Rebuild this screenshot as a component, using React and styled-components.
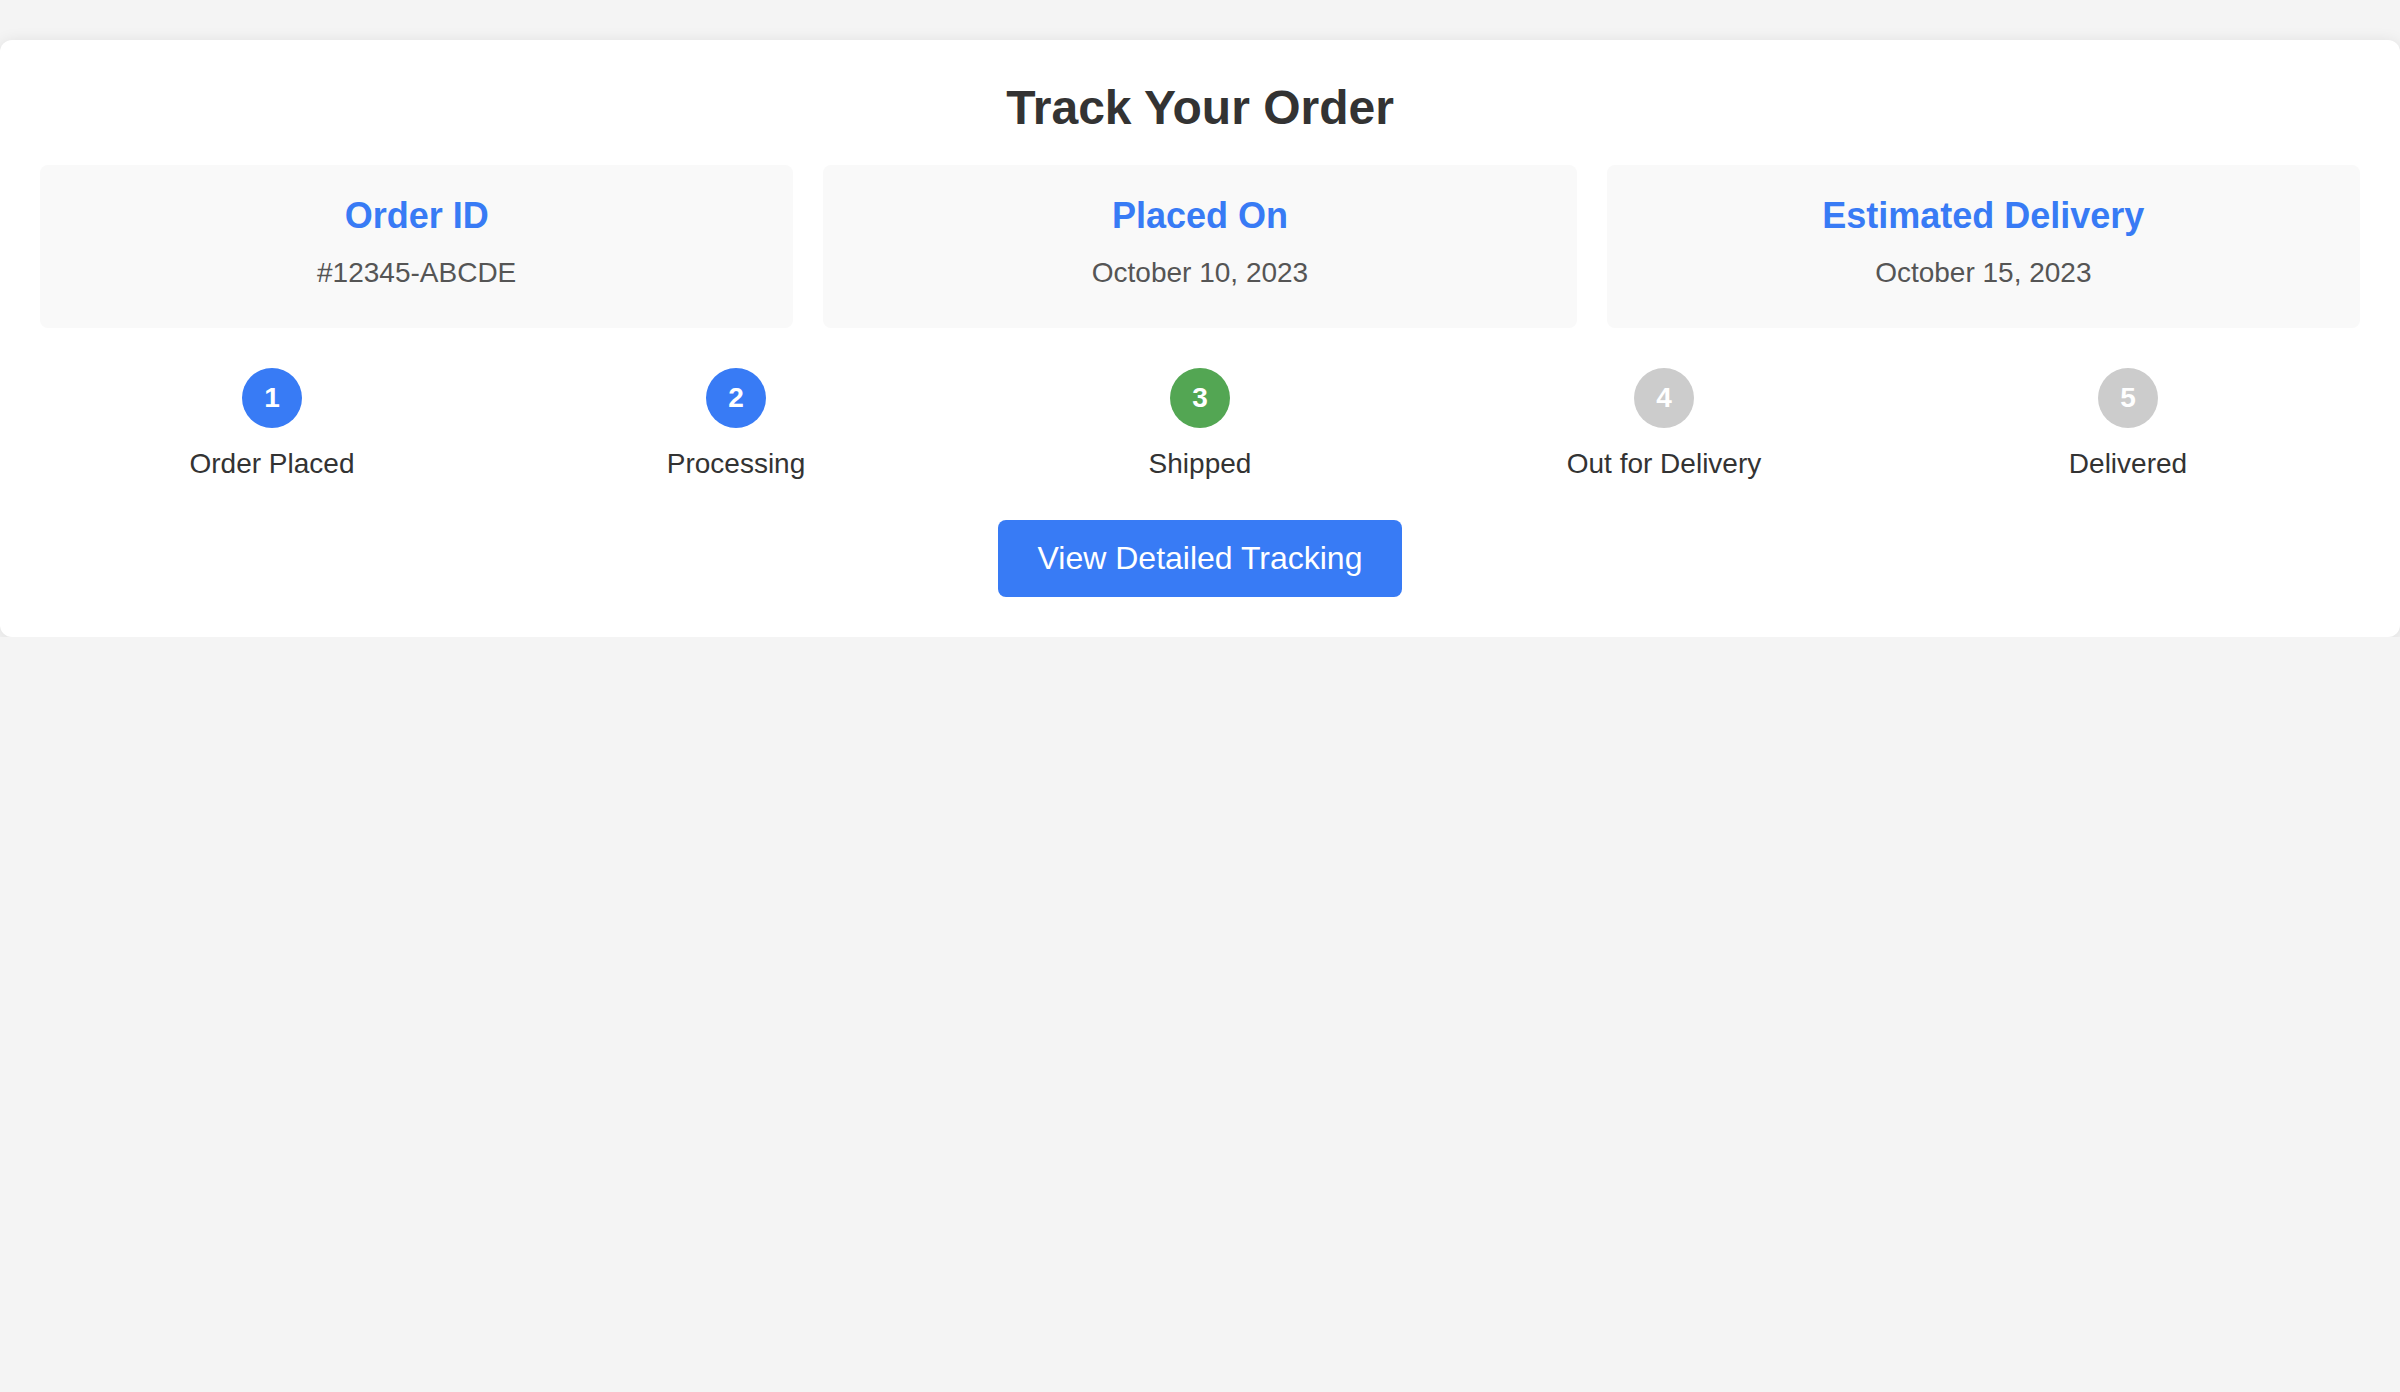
import React from "react";
import styled, { createGlobalStyle } from "styled-components";

const GlobalStyle = createGlobalStyle`
  html, body {
    margin: 0;
    padding: 0;
    background: #f4f4f4;
    font-family: "Liberation Sans", Arial, Helvetica, sans-serif;
  }
  * { box-sizing: border-box; }
`;

const Page = styled.div`
  padding-top: 40px;
`;

const Card = styled.div`
  background: #ffffff;
  border-radius: 12px;
  box-shadow: 0 2px 16px rgba(0, 0, 0, 0.1);
  padding: 40px;
  display: flex;
  flex-direction: column;
  align-items: stretch;
`;

const Title = styled.h1`
  margin: 0 0 30px;
  text-align: center;
  font-size: 48px;
  font-weight: 700;
  color: #333333;
  line-height: 55px;
`;

const InfoRow = styled.div`
  display: grid;
  grid-template-columns: repeat(3, 1fr);
  gap: 30px;
`;

const InfoBox = styled.div`
  background: #f9f9f9;
  border-radius: 8px;
  padding: 30px 20px 39px;
  text-align: center;
`;

const InfoLabel = styled.h3`
  margin: 0 0 21px;
  font-size: 36px;
  line-height: 41px;
  font-weight: 700;
  color: #387bf5;
`;

const InfoValue = styled.p`
  margin: 0;
  font-size: 28px;
  line-height: 32px;
  color: #555555;
`;

const Steps = styled.div`
  display: flex;
  margin-top: 40px;
`;

const Step = styled.div`
  flex: 1;
  display: flex;
  flex-direction: column;
  align-items: center;
  gap: 20px;
`;

const Circle = styled.div`
  width: 60px;
  height: 60px;
  border-radius: 50%;
  display: flex;
  align-items: center;
  justify-content: center;
  background: ${(p) => p.$color};
  color: #ffffff;
  font-size: 28px;
  font-weight: 700;
`;

const StepLabel = styled.div`
  font-size: 28px;
  line-height: 32px;
  color: #333333;
`;

const ButtonRow = styled.div`
  display: flex;
  justify-content: center;
  margin-top: 40px;
`;

const Button = styled.button`
  background: #387bf5;
  color: #ffffff;
  border: none;
  border-radius: 8px;
  padding: 20px 40px;
  font-family: "Liberation Sans", Arial, Helvetica, sans-serif;
  font-size: 32px;
  line-height: 37px;
  cursor: pointer;
`;

const info = [
  { label: "Order ID", value: "#12345-ABCDE" },
  { label: "Placed On", value: "October 10, 2023" },
  { label: "Estimated Delivery", value: "October 15, 2023" },
];

const steps = [
  { n: 1, label: "Order Placed", color: "#387bf5" },
  { n: 2, label: "Processing", color: "#387bf5" },
  { n: 3, label: "Shipped", color: "#53a653" },
  { n: 4, label: "Out for Delivery", color: "#cccccc" },
  { n: 5, label: "Delivered", color: "#cccccc" },
];

export default function App() {
  return (
    <>
      <GlobalStyle />
      <Page>
        <Card>
          <Title>Track Your Order</Title>
          <InfoRow>
            {info.map((i) => (
              <InfoBox key={i.label}>
                <InfoLabel>{i.label}</InfoLabel>
                <InfoValue>{i.value}</InfoValue>
              </InfoBox>
            ))}
          </InfoRow>
          <Steps>
            {steps.map((s) => (
              <Step key={s.n}>
                <Circle $color={s.color}>{s.n}</Circle>
                <StepLabel>{s.label}</StepLabel>
              </Step>
            ))}
          </Steps>
          <ButtonRow>
            <Button>View Detailed Tracking</Button>
          </ButtonRow>
        </Card>
      </Page>
    </>
  );
}
